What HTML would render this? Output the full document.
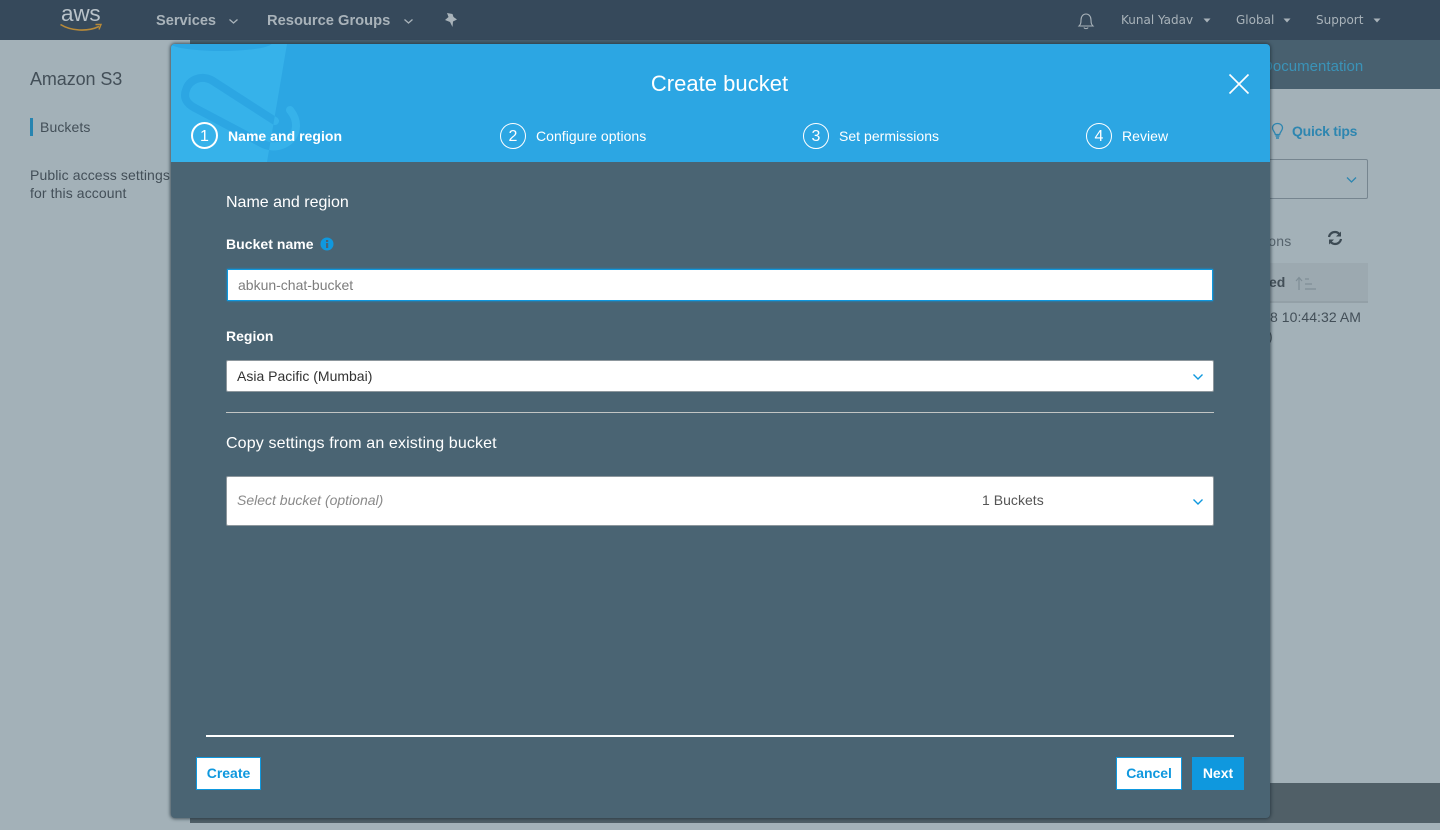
<!DOCTYPE html>
<html lang="en">
<head>
<meta charset="utf-8">
<title>Create bucket</title>
<style>
html,body{margin:0;padding:0;width:1440px;height:830px;overflow:hidden;background:#a3b1b8;font-family:"Liberation Sans",sans-serif;}
.a{position:absolute;white-space:nowrap;line-height:1;}
#nav{position:absolute;left:0;top:0;width:1440px;height:40px;background:#36495b;}
#band{position:absolute;left:190px;top:40px;width:1250px;height:49px;background:#48606f;}
#foot{position:absolute;left:190px;top:783px;width:1250px;height:40px;background:#505f67;}
#modal{position:absolute;left:171px;top:44px;width:1099px;height:774px;background:#4a6473;border-radius:4px;overflow:hidden;box-shadow:0 0 3px 1px rgba(30,45,55,.7);}
#mh{position:absolute;left:0;top:0;width:1099px;height:118px;background:#2ca6e3;}
.field{position:absolute;background:#fff;box-sizing:border-box;border:1px solid #8d979d;border-radius:2px;}
.step{position:absolute;width:24px;height:24px;border:1px solid #fff;border-radius:50%;color:#fff;font-size:16px;line-height:26px;text-align:center;font-weight:400;}
.lbl{color:#fff;font-size:14px;letter-spacing:.03px;}
.btn{position:absolute;box-sizing:border-box;height:33px;text-align:center;font-size:14px;font-weight:700;line-height:31px;}
.nt{font-family:'DejaVu Sans',sans-serif;font-size:12px;color:#a9b3ba;top:14px;}
.sb{font-size:14px;color:#434f58;letter-spacing:.1px;}
</style>
</head>
<body>
<div id="nav"></div>
<div class="a" style="left:61px;top:3px;font-size:22.500px;color:#b9c2c9;letter-spacing:-.2px;">aws</div>
<svg class="a" style="left:59px;top:22px" width="44" height="12" viewBox="0 0 44 12"><path d="M1.500 2.500C12 9 28 10 40 4.500" fill="none" stroke="#b88a38" stroke-width="1.600"/><path d="M36.500 2.500L42 2.500L40 7.500" fill="none" stroke="#b88a38" stroke-width="1.400"/></svg>
<div class="a" style="left:156px;top:14px;font-size:14.600px;font-weight:700;color:#a9b3ba;">Services</div>
<svg class="a" style="left:228px;top:18px" width="11" height="7"><path d="M1.500 1.500L5.500 5L9.500 1.500" fill="none" stroke="#a9b3ba" stroke-width="1.300"/></svg>
<div class="a" style="left:267px;top:14px;font-size:14.700px;font-weight:700;color:#a9b3ba;">Resource Groups</div>
<svg class="a" style="left:403px;top:18px" width="11" height="7"><path d="M1.500 1.500L5.500 5L9.500 1.500" fill="none" stroke="#a9b3ba" stroke-width="1.300"/></svg>
<svg class="a" style="left:444px;top:12px" width="14" height="16" viewBox="0 0 14 16"><path d="M3 1L8.500 2L9.500 5L13 7.500L9 9.500L8.500 15L6 10L1 8L4.500 5Z" fill="#a9b3ba"/></svg>
<svg class="a" style="left:1077px;top:12px" width="18" height="18" viewBox="0 0 18 18"><path d="M2 14C3.500 12.500 4 11.500 4 8C4 4.500 6 2 9 2C12 2 14 4.500 14 8C14 11.500 14.500 12.500 16 14Z" fill="none" stroke="#a9b3ba" stroke-width="1.100"/><path d="M7 15.500C7.500 17 10.500 17 11 15.500" fill="none" stroke="#a9b3ba" stroke-width="1.100"/></svg>
<div class="a nt" style="left:1121px;">Kunal Yadav</div>
<div class="a nt" style="left:1236px;">Global</div>
<div class="a nt" style="left:1316px;">Support</div>
<svg class="a" style="left:1203px;top:18px" width="8" height="5"><path d="M0.500 0.500H7.500L4 4.500Z" fill="#a9b3ba"/></svg>
<svg class="a" style="left:1283px;top:18px" width="8" height="5"><path d="M0.500 0.500H7.500L4 4.500Z" fill="#a9b3ba"/></svg>
<svg class="a" style="left:1373px;top:18px" width="8" height="5"><path d="M0.500 0.500H7.500L4 4.500Z" fill="#a9b3ba"/></svg>

<div id="band"></div>
<div id="foot"></div>
<div class="a" style="left:30px;top:70px;font-size:18px;color:#434f58;letter-spacing:-.1px;">Amazon S3</div>
<div class="a" style="left:30px;top:118px;width:3px;height:18px;background:#2784b0;"></div>
<div class="a sb" style="left:40px;top:120px;">Buckets</div>
<div class="a sb" style="left:30px;top:168px;">Public access settings</div>
<div class="a sb" style="left:30px;top:186px;">for this account</div>

<div class="a" style="left:1262px;top:59px;font-size:15px;color:#3a93b8;letter-spacing:.03px;">Documentation</div>
<svg class="a" style="left:1271px;top:122px" width="13" height="18" viewBox="0 0 13 18"><path d="M6.500 1.500C3.500 1.500 1.500 3.500 1.500 6C1.500 8.500 4 10 4.300 12.500H8.700C9 10 11.500 8.500 11.500 6C11.500 3.500 9.500 1.500 6.500 1.500Z" fill="none" stroke="#2e86b0" stroke-width="1.300"/><path d="M4.500 14H8.500M5 16H8" stroke="#2e86b0" stroke-width="1.500"/></svg>
<div class="a" style="left:1292px;top:124px;font-size:14px;font-weight:700;color:#2e86b0;letter-spacing:-.25px;">Quick tips</div>
<div class="a" style="left:1260px;top:159px;width:108px;height:40px;box-sizing:border-box;border:1px solid #76858f;border-radius:2px;"></div>
<svg class="a" style="left:1345px;top:176px" width="13" height="8"><path d="M2 1.500L6.500 6L11 1.500" fill="none" stroke="#2e86b0" stroke-width="1.300"/></svg>
<div class="a" style="left:1265px;top:234px;font-size:14px;color:#56636c;letter-spacing:.2px;">ions</div>
<svg class="a" style="left:1327px;top:230px" width="16" height="16" viewBox="0 0 16 16"><path d="M2 7C2.500 4 5 2 8 2C10 2 11.500 3 12.500 4.300M14 9C13.500 12 11 14 8 14C6 14 4.500 13 3.500 11.700" fill="none" stroke="#3c4a53" stroke-width="2.200"/><path d="M14 1.500V6.500H9ZM2 14.500V9.500H7Z" fill="#3c4a53"/></svg>
<div class="a" style="left:1260px;top:263px;width:108px;height:40px;background:#9ca9b0;border-bottom:2px solid #93a0a7;box-sizing:border-box;"></div>
<div class="a" style="left:1269px;top:275px;font-size:14px;font-weight:700;color:#434f58;">ed</div>
<svg class="a" style="left:1294px;top:275px" width="23" height="16" viewBox="0 0 23 16"><path d="M5 15V3M2 6L5 2.500L8 6" fill="none" stroke="#7f8e96" stroke-width="1.200"/><path d="M11 4H15M11 9H18M11 14H22" stroke="#7f8e96" stroke-width="1.200"/></svg>
<div class="a" style="left:1270px;top:310px;font-size:14px;color:#434f58;letter-spacing:.05px;">8 10:44:32 AM</div>
<div class="a" style="left:1268px;top:329px;font-size:14px;color:#434f58;">)</div>

<div id="modal">
  <div id="mh">
    <svg style="position:absolute;left:0;top:0" width="135" height="118" viewBox="0 0 135 118">
      <defs><clipPath id="bk"><path d="M0 0H116L96 118H0Z"/></clipPath></defs>
      <path d="M0 0H116L96 118H0Z" fill="#36b2ea"/>
      <ellipse cx="50" cy="-1" rx="51" ry="8" fill="#2ca6e3"/>
      <path d="M104 77L42 37C30 30 18 36 15 46C12 54 16 60 24 64L92 100C105 106 120 100 124 88C127 78 123 71 119 66" fill="none" stroke="#36b2ea" stroke-width="8" stroke-linecap="round"/>
      <path d="M104 77L42 37C30 30 18 36 15 46C12 54 16 60 24 64L92 100C105 106 120 100 124 88C127 78 123 71 119 66" fill="none" stroke="#2ca6e3" stroke-width="8" stroke-linecap="round" clip-path="url(#bk)"/>
    </svg>
    <div class="a" style="left:-1px;width:1099px;text-align:center;top:29px;font-size:22px;color:#fff;letter-spacing:.03px;">Create bucket</div>
    <svg class="a" style="left:1057px;top:29px" width="22" height="22"><path d="M1.500 1.500L20.500 20.500M20.500 1.500L1.500 20.500" stroke="#fff" stroke-width="1.600"/></svg>
    <div class="step" style="left:20px;top:78px;border-width:2px;width:23px;height:23px;line-height:25px;">1</div>
    <div class="a lbl" style="left:57px;top:85px;font-weight:700;">Name and region</div>
    <div class="step" style="left:329px;top:79px;">2</div>
    <div class="a lbl" style="left:365px;top:85px;">Configure options</div>
    <div class="step" style="left:632px;top:79px;">3</div>
    <div class="a lbl" style="left:668px;top:85px;">Set permissions</div>
    <div class="step" style="left:915px;top:79px;">4</div>
    <div class="a lbl" style="left:951px;top:85px;">Review</div>
  </div>
  <div class="a" style="left:55px;top:151px;font-size:16px;color:#fff;">Name and region</div>
  <div class="a" style="left:55px;top:193px;font-size:14px;font-weight:700;color:#fff;letter-spacing:.04px;">Bucket name</div>
  <svg class="a" style="left:149px;top:193px" width="14" height="14" viewBox="0 0 14 14"><circle cx="7" cy="7" r="6.500" fill="#0f98de"/><rect x="6" y="6" width="2.200" height="5" fill="#4a6374"/><rect x="6" y="3" width="2.200" height="2" fill="#4a6374"/></svg>
  <div class="field" style="left:56px;top:225px;width:986px;height:32px;border:1px solid #0f98de;border-radius:0;box-shadow:0 0 2px #0f98de;"></div>
  <div class="a" style="left:67px;top:234px;font-size:14px;color:#7d7d7d;">abkun-chat-bucket</div>
  <div class="a" style="left:55px;top:285px;font-size:14px;font-weight:700;color:#fff;">Region</div>
  <div class="field" style="left:55px;top:316px;width:988px;height:32px;"></div>
  <div class="a" style="left:66px;top:325px;font-size:14px;color:#333;">Asia Pacific (Mumbai)</div>
  <svg class="a" style="left:1021px;top:329px" width="12" height="8"><path d="M1.500 1.500L6 6L10.500 1.500" fill="none" stroke="#0f98de" stroke-width="1.400"/></svg>
  <div class="a" style="left:55px;top:368px;width:988px;height:1px;background:#c2c5c4;"></div>
  <div class="a" style="left:55px;top:392px;font-size:16px;color:#fff;letter-spacing:.13px;">Copy settings from an existing bucket</div>
  <div class="field" style="left:55px;top:432px;width:988px;height:50px;"></div>
  <div class="a" style="left:66px;top:449px;font-size:14px;font-style:italic;color:#8a8a8a;">Select bucket (optional)</div>
  <div class="a" style="left:811px;top:449px;font-size:14px;color:#555;letter-spacing:.03px;">1 Buckets</div>
  <svg class="a" style="left:1021px;top:454px" width="12" height="8"><path d="M1.500 1.500L6 6L10.500 1.500" fill="none" stroke="#0f98de" stroke-width="1.400"/></svg>
  <div class="a" style="left:35px;top:691px;width:1028px;height:2px;background:#fff;"></div>
  <div class="btn" style="left:25px;top:713px;width:65px;background:#fff;border:1px solid #0f98de;color:#0f98de;">Create</div>
  <div class="btn" style="left:945px;top:713px;width:66px;background:#fff;border:1px solid #0f98de;color:#0f98de;letter-spacing:-.05px;">Cancel</div>
  <div class="btn" style="left:1021px;top:713px;width:52px;background:#0f98de;color:#fff;line-height:33px;">Next</div>
</div>
</body>
</html>
